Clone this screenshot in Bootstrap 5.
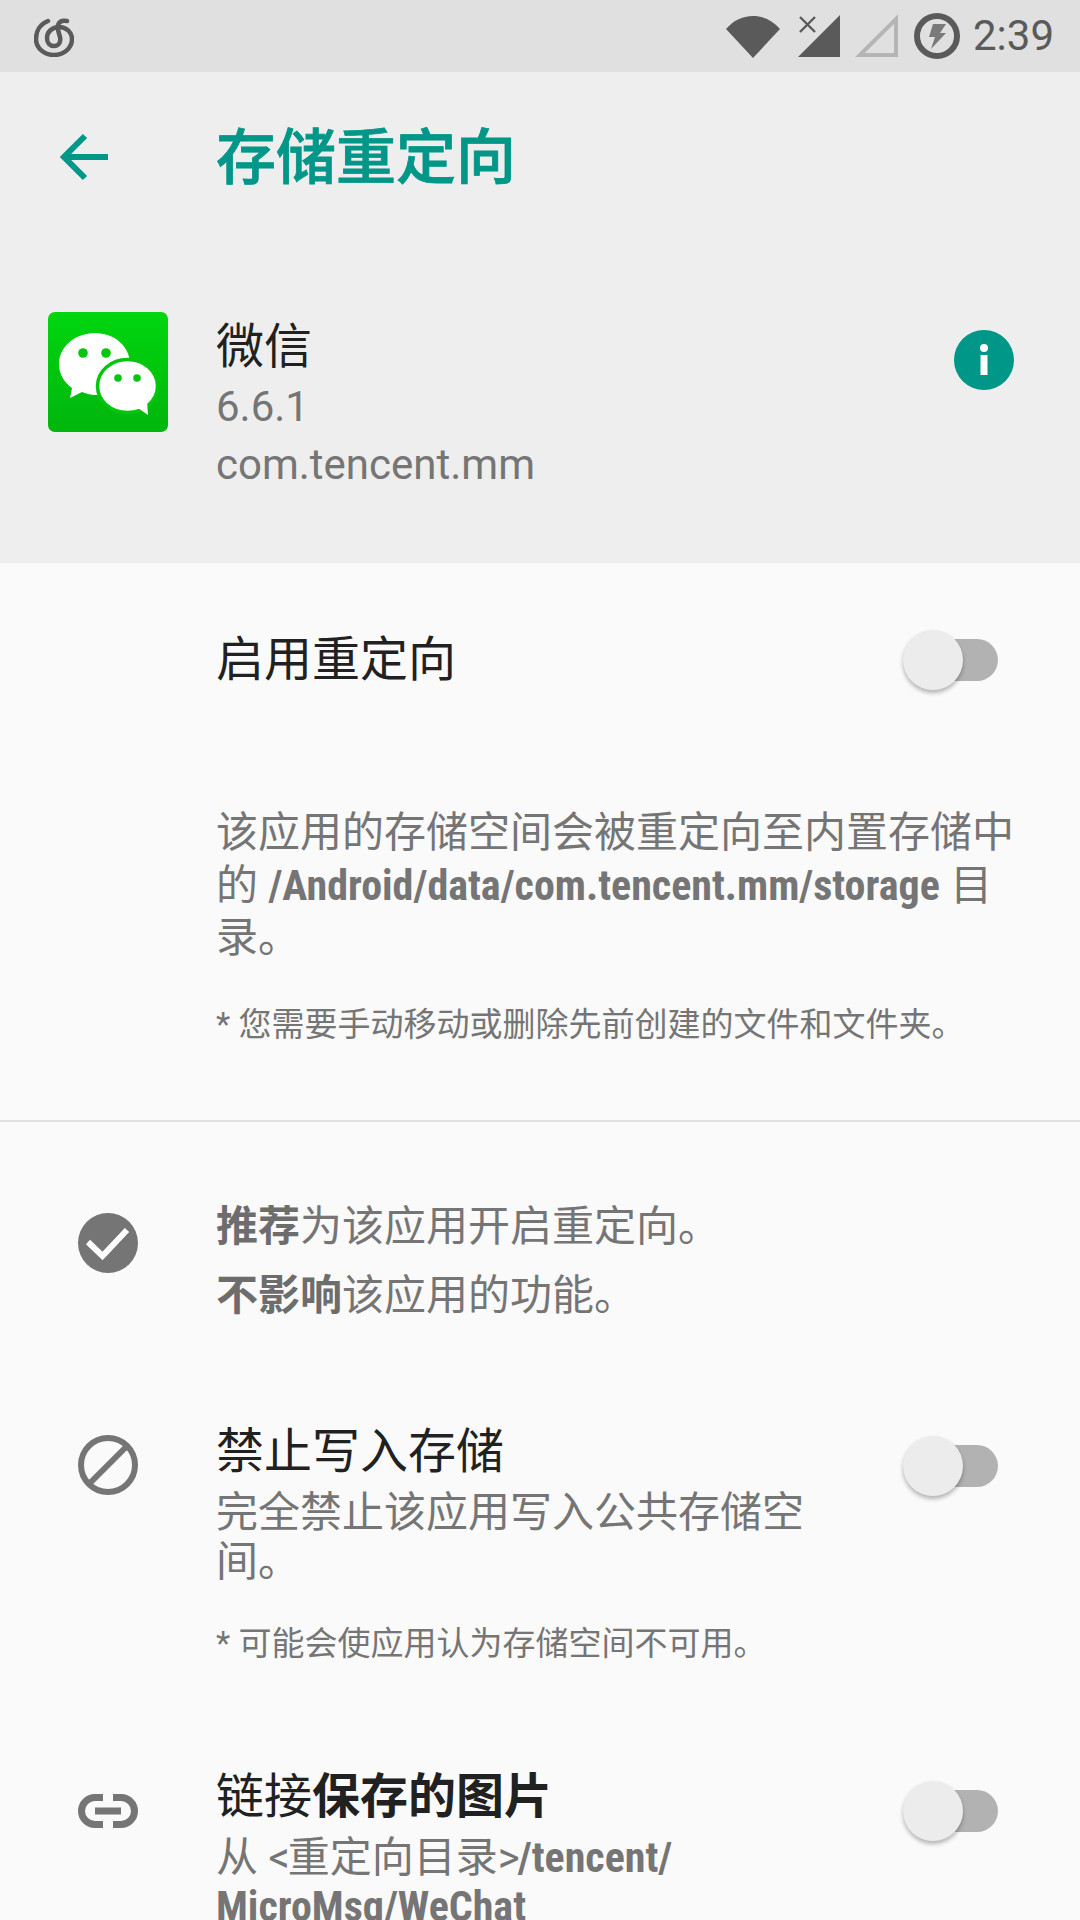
<!DOCTYPE html>
<html lang="zh-CN">
<head>
  <meta charset="UTF-8">
  <meta name="viewport" content="width=device-width, initial-scale=1.0">
  <title>存储重定向</title>
  <link href="https://cdn.jsdelivr.net/npm/bootstrap@5.3.0/dist/css/bootstrap.min.css" rel="stylesheet">
  <style>
    html, body { height: 1920px; overflow: hidden; }
    body {
      background-color: #fafafa;
      font-family: Roboto, "Noto Sans CJK SC", sans-serif;
      color: #757575;
    }
    .status-strip { height: 72px; background: #e0e0e0; color: #5a5a5a; padding: 0 26px 0 34px; }
    .status-time { font-size: 42px; line-height: 72px; margin-left: 13px; }
    .wifi-glyph { margin-right: 17px; }
    .net-glyph { margin-right: 14px; }
    .net2-glyph { margin-right: 15px; }
    .logo-glyph { margin-top: -3px; }
    .app-head { height: 491px; background: #eeeeee; }
    .tool-row { height: 170px; }
    .back-slot { width: 216px; padding-left: 59px; }
    .page-name { font-size: 60px; line-height: 70px; font-weight: 500; -webkit-text-stroke: .8px #009688; color: #009688; margin-top: 3px; }
    .app-row { padding: 70px 66px 0 48px; }
    .app-logo { width: 120px; height: 120px; border-radius: 7px; margin-right: 48px; background: linear-gradient(#00d60f, #00b50c); }
    .app-name { font-size: 48px; line-height: 63px; color: #212121; margin-top: 3px; }
    .app-sub { font-size: 42px; line-height: 58px; color: #757575; }
    .info-dot { margin-top: 18px; }
    .icon-slot { width: 216px; flex-shrink: 0; }
    .row-title { font-size: 48px; line-height: 56px; color: #212121; }
    .row-sub { font-size: 42px; line-height: 49px; margin-top: 8px; width: 620px; }
    .row-note { font-size: 33px; line-height: 50px; }
    .desc-text { font-size: 42px; line-height: 52.5px; }
    .path-text { font-weight: 700; font-stretch: condensed; }
    .angle-mark { letter-spacing: -2px; }
    .toggle-box { position: relative; width: 95px; height: 60px; margin-right: 82px; flex-shrink: 0; }
    .toggle-track { position: absolute; left: 15px; right: 0; top: 9px; height: 42px; border-radius: 21px; background: #b2b2b2; }
    .toggle-thumb { position: absolute; left: 0; top: 0; width: 60px; height: 60px; border-radius: 50%; background: #ececec; box-shadow: 0 3px 4px rgba(0,0,0,.28); }
    .opt-toggle { margin-top: 12px; }
    .enable-row { height: 194px; }
    .desc-block { padding: 50px 50px 70px 216px; }
    .desc-note { margin-top: 35px; }
    .sep-line { height: 2px; background: #e0e0e0; }
    .rec-row { padding-top: 70px; }
    .rec-line { font-size: 42px; line-height: 69px; }
    .rec-line b { font-weight: 700; color: #6d6d6d; }
    .rec-icon { margin-top: 21px; }
    .block-row { margin-top: 94px; }
    .link-row { margin-top: 100px; }
    .opt-icon { margin-top: 11px; }
    .opt-note { margin-top: 33px; }
    .link-icon { margin-top: 25px; }
  </style>
</head>
<body>
  <div class="status-strip d-flex align-items-center">
    <svg class="logo-glyph" width="40" height="44" viewBox="0 0 40 44" fill="none" stroke="#5a5a5a" stroke-width="4.5" stroke-linecap="round">
      <path d="M14 8C6 11 2 18 2 26c0 9 8 16 18 16s18-7 18-16c0-7-6-12-13-12-7 0-12 5-12 11 0 5 3 8 7 8 5 0 7-4 6-9-1-4-3-8-2-12 1-3 4-5 9-4"/>
    </svg>
    <div class="ms-auto d-flex align-items-center">
      <svg class="wifi-glyph" width="54" height="44" viewBox="0 0 54 44"><path d="M0 15C7 7 16 2 27 2s20 5 27 13L27 44z" fill="#5a5a5a"/></svg>
      <svg class="net-glyph" width="44" height="44" viewBox="0 0 44 44">
        <path d="M1 43L43 1v42z" fill="#5a5a5a"/>
        <path d="M3 3l15 15M18 3L3 18" stroke="#5a5a5a" stroke-width="2.4"/>
      </svg>
      <svg class="net2-glyph" width="44" height="44" viewBox="0 0 44 44"><path d="M5 41L41 5v36z" fill="none" stroke="#b5b5b5" stroke-width="4"/></svg>
      <svg width="46" height="46" viewBox="0 0 46 46">
        <circle cx="23" cy="23" r="20" fill="none" stroke="#5a5a5a" stroke-width="6"/>
        <path d="M19 11h13l-6 9h6L17 36l4-12h-6z" fill="#7a7a7a"/>
      </svg>
      <span class="status-time">2:39</span>
    </div>
  </div>

  <div class="app-head">
    <div class="tool-row d-flex align-items-center">
      <div class="back-slot">
        <svg width="50" height="48" viewBox="0 0 50 48" fill="none" stroke="#009688" stroke-width="6"><path d="M49 24H5M26 3L5 24l21 21"/></svg>
      </div>
      <div class="page-name">存储重定向</div>
    </div>
    <div class="app-row d-flex align-items-start">
      <div class="app-logo flex-shrink-0">
        <svg width="120" height="120" viewBox="0 0 120 120">
          <path d="M47 21c-20 0-36 14-36 31 0 10 5 18 13 24l-2 10 12-6c5 2 9 3 13 3 20 0 35-14 35-31S67 21 47 21z" fill="#fff"/>
          <ellipse cx="79.500" cy="74" rx="30" ry="26.500" fill="#fff" stroke="#05c60e" stroke-width="3.500"/>
          <path d="M90 96l10 7-1-14z" fill="#fff"/>
          <circle cx="35" cy="41" r="4.800" fill="#05c60e"/><circle cx="58" cy="41" r="4.800" fill="#05c60e"/>
          <circle cx="70" cy="66" r="3.800" fill="#05c60e"/><circle cx="89" cy="66" r="3.800" fill="#05c60e"/>
        </svg>
      </div>
      <div>
        <div class="app-name">微信</div>
        <div class="app-sub">6.6.1</div>
        <div class="app-sub">com.tencent.mm</div>
      </div>
      <svg class="info-dot ms-auto" width="60" height="60" viewBox="0 0 60 60">
        <circle cx="30" cy="30" r="30" fill="#009688"/>
        <circle cx="30" cy="18" r="4" fill="#fff"/><rect x="26.500" y="25" width="7" height="20" fill="#fff"/>
      </svg>
    </div>
  </div>

  <div class="enable-row d-flex align-items-center">
    <div class="icon-slot"></div>
    <div class="row-title flex-grow-1">启用重定向</div>
    <div class="toggle-box"><div class="toggle-track"></div><div class="toggle-thumb"></div></div>
  </div>
  <div class="desc-block">
    <div class="desc-text">该应用的存储空间会被重定向至内置存储中的 <span class="path-text">/Android/data/com.tencent.mm/storage</span> 目录。</div>
    <div class="row-note desc-note">* 您需要手动移动或删除先前创建的文件和文件夹。</div>
  </div>
  <div class="sep-line"></div>

  <div class="rec-row d-flex align-items-start">
    <div class="icon-slot d-flex justify-content-center">
      <svg class="rec-icon" width="60" height="60" viewBox="0 0 60 60">
        <circle cx="30" cy="30" r="30" fill="#757575"/>
        <path d="M10 29l14.500 14L49 17" fill="none" stroke="#fff" stroke-width="6"/>
      </svg>
    </div>
    <div>
      <div class="rec-line"><b>推荐</b>为该应用开启重定向。</div>
      <div class="rec-line"><b>不影响</b>该应用的功能。</div>
    </div>
  </div>

  <div class="block-row d-flex align-items-start">
    <div class="icon-slot d-flex justify-content-center">
      <svg class="opt-icon" width="60" height="60" viewBox="0 0 60 60" fill="none" stroke="#757575" stroke-width="6">
        <circle cx="30" cy="30" r="27"/><path d="M11 49L49 11"/>
      </svg>
    </div>
    <div class="flex-grow-1">
      <div class="d-flex align-items-start">
        <div class="flex-grow-1">
          <div class="row-title">禁止写入存储</div>
          <div class="row-sub">完全禁止该应用写入公共存储空间。</div>
        </div>
        <div class="toggle-box opt-toggle"><div class="toggle-track"></div><div class="toggle-thumb"></div></div>
      </div>
      <div class="row-note opt-note">* 可能会使应用认为存储空间不可用。</div>
    </div>
  </div>

  <div class="link-row d-flex align-items-start">
    <div class="icon-slot d-flex justify-content-center">
      <svg class="link-icon" width="60" height="34" viewBox="0 0 60 34" fill="none" stroke="#757575" stroke-width="7">
        <path d="M25 3.500H17a13.500 13.500 0 0 0 0 27h8M35 3.500h8a13.500 13.500 0 0 1 0 27h-8M17 17h26"/>
      </svg>
    </div>
    <div class="flex-grow-1">
      <div class="d-flex align-items-start">
        <div class="flex-grow-1">
          <div class="row-title">链接<b>保存的图片</b></div>
          <div class="row-sub">从 <span class="angle-mark">&lt;</span>重定向目录<span class="angle-mark">&gt;</span><span class="path-text">/tencent/ MicroMsg/WeChat</span></div>
        </div>
        <div class="toggle-box opt-toggle"><div class="toggle-track"></div><div class="toggle-thumb"></div></div>
      </div>
    </div>
  </div>

  <script src="https://cdn.jsdelivr.net/npm/bootstrap@5.3.0/dist/js/bootstrap.bundle.min.js"></script>
</body>
</html>
